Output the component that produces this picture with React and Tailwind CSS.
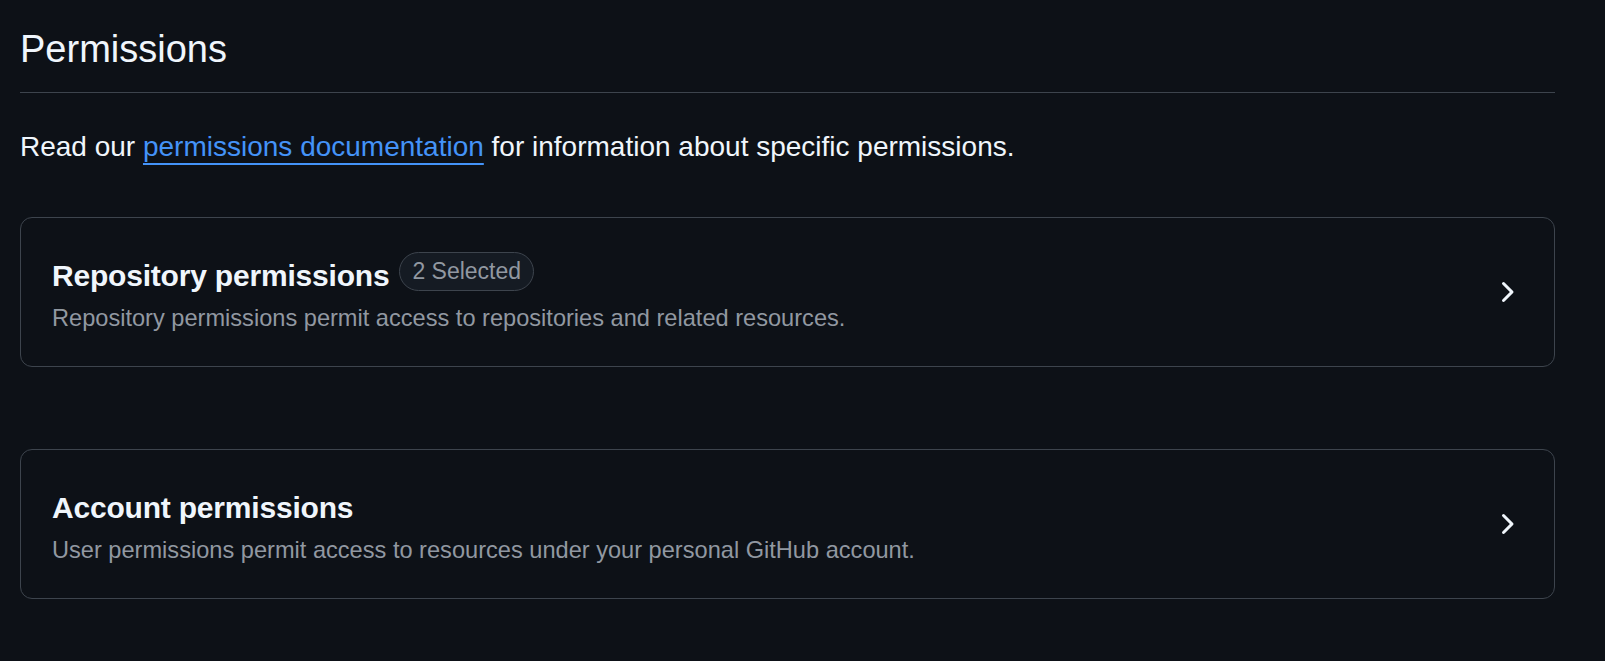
import React from "react";

function Chevron() {
  return (
    <svg width="32" height="32" viewBox="0 0 16 16" fill="#f0f6fc" aria-hidden="true">
      <path d="M6.22 3.22a.75.75 0 0 1 1.06 0l4.25 4.25a.75.75 0 0 1 0 1.06l-4.25 4.25a.751.751 0 0 1-1.042-.018.751.751 0 0 1-.018-1.042L9.94 8 6.22 4.28a.75.75 0 0 1 0-1.06Z" />
    </svg>
  );
}

function PermCard({ title, badge, desc, className }) {
  return (
    <div
      className={
        "flex items-center justify-between h-[150px] rounded-[12px] border border-[#3d444d] pl-[31px] pr-[32px] " +
        (className || "")
      }
    >
      <div className="flex flex-col self-start pt-[34px]">
        <div className="flex items-start min-h-[43px]">
          <h3 className="mt-[6px] text-[30px] leading-[36px] font-bold tracking-[-0.2px] text-[#f0f6fc]">{title}</h3>
          {badge && (
            <span className="ml-[10px] flex h-[39px] items-center rounded-full border border-[#3d444d] bg-[#151b23] px-[12px] text-[23px] text-[#9198a1]">
              {badge}
            </span>
          )}
        </div>
        <p className="mt-[6px] text-[23.6px] leading-[34px] text-[#9198a1]">{desc}</p>
      </div>
      <Chevron />
    </div>
  );
}

export default function App() {
  return (
    <div
      className="min-h-screen w-full bg-[#0d1117] pl-[20px] pr-[50px]"
      style={{ fontFamily: '"Liberation Sans", Arial, sans-serif' }}
    >
      <div className="border-b border-[#3d444d] pt-[25px] pb-[19px]">
        <h2 className="text-[38px] leading-[48px] font-normal text-[#f0f6fc]">Permissions</h2>
      </div>
      <p className="mt-[34px] text-[28px] leading-[40px] text-[#f0f6fc]">
        Read our{" "}
        <a
          href="#"
          className="text-[#4493f8] underline decoration-[1.5px] underline-offset-[7px]"
        >
          permissions documentation
        </a>{" "}
        for information about specific permissions.
      </p>
      <PermCard
        className="mt-[50px]"
        title="Repository permissions"
        badge="2 Selected"
        desc="Repository permissions permit access to repositories and related resources."
      />
      <PermCard
        className="mt-[82px]"
        title="Account permissions"
        desc="User permissions permit access to resources under your personal GitHub account."
      />
    </div>
  );
}
